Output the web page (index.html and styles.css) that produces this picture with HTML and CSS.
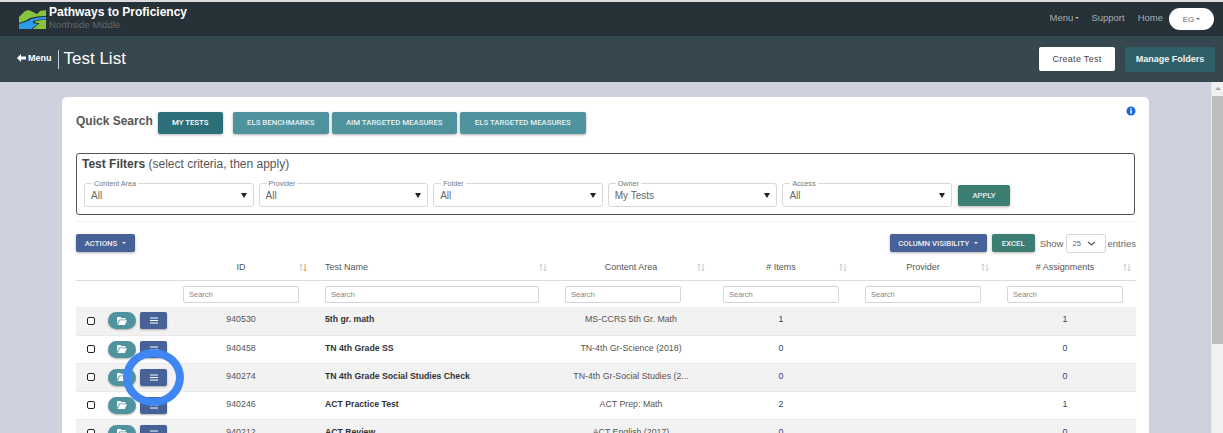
FILE: index.html
```html
<!DOCTYPE html>
<html lang="en">
<head>
<meta charset="utf-8">
<title>Test List</title>
<link rel="stylesheet" href="styles.css">
</head>
<body>
<div class="app">
  <nav class="topnav">
    <div class="brand">
      <svg class="logo" width="27" height="20" viewBox="0 0 27 20">
        <path d="M0 8 L5 3 Q8 0 12 2 L18 5 L21 2 L27 1 L27 7 C19 7 11 8 8 11 L0 14Z" fill="#86c440"/>
        <path d="M0 15 L9 12 C13 9 20 8 27 8 L27 10.5 C21 10.5 15 11 14 12.5 C13 14 16 14.5 19 15 L12 20 L0 20Z" fill="#2f9ae5"/>
        <path d="M15.5 12.5 C18 11.5 22 11 27 11 L27 20 L13.5 20 L20.5 14.5 C18 14 16 13.5 15.5 12.5Z" fill="#86c440"/>
      </svg>
      <div class="brand-text">
        <div class="brand-name">Pathways to Proficiency</div>
        <div class="brand-school">Northside Middle</div>
      </div>
    </div>
    <div class="nav-links">
      <span class="nav-link">Menu<i class="caret"></i></span>
      <span class="nav-link">Support</span>
      <span class="nav-link">Home</span>
      <span class="user-pill">EG<i class="caret"></i></span>
    </div>
  </nav>
  <header class="pagehead">
    <div class="pagehead-left">
      <span class="menu-back"><svg width="9" height="8" viewBox="0 0 9 8"><path d="M4 0 L0 4 L4 8 L4 5.5 L9 5.5 L9 2.5 L4 2.5Z" fill="#fff"/></svg>Menu</span>
      <h1 class="page-title">Test List</h1>
    </div>
    <div class="pagehead-right">
      <button class="btn-create">Create Test</button>
      <button class="btn-folders">Manage Folders</button>
    </div>
  </header>
  <div class="body-row">
    <main class="content">
      <section class="card">
        <div class="quick">
          <span class="quick-label">Quick Search</span>
          <button class="chip chip-active">MY TESTS</button>
          <button class="chip chip-first">ELS BENCHMARKS</button>
          <button class="chip">AIM TARGETED MEASURES</button>
          <button class="chip chip-last">ELS TARGETED MEASURES</button>
          <svg class="info" width="10" height="10" viewBox="0 0 10 10"><circle cx="5" cy="5" r="4.5" fill="#1a66e8"/><rect x="4.2" y="4.2" width="1.6" height="3.4" fill="#fff"/><rect x="4.2" y="2.2" width="1.6" height="1.3" fill="#fff"/></svg>
        </div>
        <section class="filters">
          <h2 class="filters-title"><b>Test Filters</b> (select criteria, then apply)</h2>
          <div class="filters-row">
            <fieldset class="fs"><legend>Content Area</legend><span>All</span><i class="tri"></i></fieldset>
            <fieldset class="fs"><legend>Provider</legend><span>All</span><i class="tri"></i></fieldset>
            <fieldset class="fs"><legend>Folder</legend><span>All</span><i class="tri"></i></fieldset>
            <fieldset class="fs"><legend>Owner</legend><span>My Tests</span><i class="tri"></i></fieldset>
            <fieldset class="fs"><legend>Access</legend><span>All</span><i class="tri"></i></fieldset>
            <button class="btn-apply">APPLY</button>
          </div>
        </section>
        <div class="divider"></div>
        <div class="toolbar">
          <button class="btn-blue btn-actions">ACTIONS<i class="caret caret-wide"></i></button>
          <div class="toolbar-right">
            <button class="btn-blue btn-colvis">COLUMN VISIBILITY<i class="caret caret-wide"></i></button>
            <button class="btn-excel">EXCEL</button>
            <span class="show">Show</span>
            <span class="select25">25<svg width="9" height="5" viewBox="0 0 9 5"><path d="M1 1 L4.5 4 L8 1" fill="none" stroke="#555" stroke-width="1.2"/></svg></span>
            <span class="show">entries</span>
          </div>
        </div>
        <table class="grid">
          <colgroup><col class="c-act"><col class="c-id"><col class="c-name"><col class="c-area"><col class="c-num"><col class="c-num"><col class="c-num"></colgroup>
          <thead>
            <tr class="heads">
              <th></th>
              <th class="sort"><span>ID</span><svg class="arr" width="8" height="9" viewBox="0 0 8 9"><path d="M2 8V1M2 1L.5 2.5M2 1L3.5 2.5" fill="none" stroke="#c5cbd0"/><path d="M6 1V8M6 8L4.5 6.5M6 8L7.5 6.5" fill="none" stroke="#f0963c"/></svg></th>
              <th class="sort left"><span>Test Name</span><svg class="arr" width="8" height="9" viewBox="0 0 8 9"><path d="M2 8V1M2 1L.5 2.5M2 1L3.5 2.5M6 1V8M6 8L4.5 6.5M6 8L7.5 6.5" fill="none" stroke="#c5cbd0"/></svg></th>
              <th class="sort"><span>Content Area</span><svg class="arr" width="8" height="9" viewBox="0 0 8 9"><path d="M2 8V1M2 1L.5 2.5M2 1L3.5 2.5M6 1V8M6 8L4.5 6.5M6 8L7.5 6.5" fill="none" stroke="#c5cbd0"/></svg></th>
              <th class="sort"><span># Items</span><svg class="arr" width="8" height="9" viewBox="0 0 8 9"><path d="M2 8V1M2 1L.5 2.5M2 1L3.5 2.5M6 1V8M6 8L4.5 6.5M6 8L7.5 6.5" fill="none" stroke="#c5cbd0"/></svg></th>
              <th class="sort"><span>Provider</span><svg class="arr" width="8" height="9" viewBox="0 0 8 9"><path d="M2 8V1M2 1L.5 2.5M2 1L3.5 2.5M6 1V8M6 8L4.5 6.5M6 8L7.5 6.5" fill="none" stroke="#c5cbd0"/></svg></th>
              <th class="sort"><span># Assignments</span><svg class="arr" width="8" height="9" viewBox="0 0 8 9"><path d="M2 8V1M2 1L.5 2.5M2 1L3.5 2.5M6 1V8M6 8L4.5 6.5M6 8L7.5 6.5" fill="none" stroke="#c5cbd0"/></svg></th>
            </tr>
            <tr class="searches">
              <th></th>
              <th><span class="search">Search</span></th>
              <th><span class="search search-wide">Search</span></th>
              <th><span class="search">Search</span></th>
              <th><span class="search">Search</span></th>
              <th><span class="search">Search</span></th>
              <th><span class="search">Search</span></th>
            </tr>
          </thead>
          <tbody>
            <tr>
              <td><div class="acts"><span class="cb"></span><span class="pill"><svg width="10" height="8" viewBox="0 0 10 8"><path d="M0 1 Q0 0 1 0 H3.4 L4.4 1 H8 Q8.8 1 8.8 2 V2.6 H2.4 L0 6.6Z M2.9 3.2 H10 L7.8 8 H.4Z" fill="#fff"/></svg></span><span class="sq"><svg width="8" height="7" viewBox="0 0 8 7"><path d="M0 1H8M0 3.5H8M0 6H8" stroke="#fff" stroke-width="1"/></svg></span></div></td>
              <td class="ctr">940530</td><td class="name">5th gr. math</td><td class="ctr">MS-CCRS 5th Gr. Math</td><td class="ctr link">1</td><td></td><td class="ctr link">1</td>
            </tr>
            <tr>
              <td><div class="acts"><span class="cb"></span><span class="pill"><svg width="10" height="8" viewBox="0 0 10 8"><path d="M0 1 Q0 0 1 0 H3.4 L4.4 1 H8 Q8.8 1 8.8 2 V2.6 H2.4 L0 6.6Z M2.9 3.2 H10 L7.8 8 H.4Z" fill="#fff"/></svg></span><span class="sq"><svg width="8" height="7" viewBox="0 0 8 7"><path d="M0 1H8M0 3.5H8M0 6H8" stroke="#fff" stroke-width="1"/></svg></span></div></td>
              <td class="ctr">940458</td><td class="name">TN 4th Grade SS</td><td class="ctr">TN-4th Gr-Science (2018)</td><td class="ctr link">0</td><td></td><td class="ctr link">0</td>
            </tr>
            <tr>
              <td><div class="acts"><span class="cb"></span><span class="pill"><svg width="10" height="8" viewBox="0 0 10 8"><path d="M0 1 Q0 0 1 0 H3.4 L4.4 1 H8 Q8.8 1 8.8 2 V2.6 H2.4 L0 6.6Z M2.9 3.2 H10 L7.8 8 H.4Z" fill="#fff"/></svg></span><span class="sq"><svg width="8" height="7" viewBox="0 0 8 7"><path d="M0 1H8M0 3.5H8M0 6H8" stroke="#fff" stroke-width="1"/></svg><i class="ring"></i></span></div></td>
              <td class="ctr">940274</td><td class="name">TN 4th Grade Social Studies Check</td><td class="ctr">TN-4th Gr-Social Studies (2...</td><td class="ctr link">0</td><td></td><td class="ctr link">0</td>
            </tr>
            <tr>
              <td><div class="acts"><span class="cb"></span><span class="pill"><svg width="10" height="8" viewBox="0 0 10 8"><path d="M0 1 Q0 0 1 0 H3.4 L4.4 1 H8 Q8.8 1 8.8 2 V2.6 H2.4 L0 6.6Z M2.9 3.2 H10 L7.8 8 H.4Z" fill="#fff"/></svg></span><span class="sq"><svg width="8" height="7" viewBox="0 0 8 7"><path d="M0 1H8M0 3.5H8M0 6H8" stroke="#fff" stroke-width="1"/></svg></span></div></td>
              <td class="ctr">940246</td><td class="name">ACT Practice Test</td><td class="ctr">ACT Prep: Math</td><td class="ctr link">2</td><td></td><td class="ctr link">1</td>
            </tr>
            <tr>
              <td><div class="acts"><span class="cb"></span><span class="pill"><svg width="10" height="8" viewBox="0 0 10 8"><path d="M0 1 Q0 0 1 0 H3.4 L4.4 1 H8 Q8.8 1 8.8 2 V2.6 H2.4 L0 6.6Z M2.9 3.2 H10 L7.8 8 H.4Z" fill="#fff"/></svg></span><span class="sq"><svg width="8" height="7" viewBox="0 0 8 7"><path d="M0 1H8M0 3.5H8M0 6H8" stroke="#fff" stroke-width="1"/></svg></span></div></td>
              <td class="ctr">940212</td><td class="name">ACT Review</td><td class="ctr">ACT English (2017)</td><td class="ctr link">0</td><td></td><td class="ctr link">0</td>
            </tr>
          </tbody>
        </table>
      </section>
    </main>
    <div class="scrollbar"><div class="sb-up"></div><div class="sb-thumb"></div></div>
  </div>
</div>
</body>
</html>
```
FILE: styles.css
```css
* { box-sizing: border-box; }
html, body { margin: 0; height: 100%; overflow: hidden; }
body { font-family: "Liberation Sans", Arial, sans-serif; color: #444; background: #ced2de; }
button { font-family: Roboto, "Liberation Sans", sans-serif; border: 0; cursor: pointer; }
.app { height: 433px; display: flex; flex-direction: column; border-top: 2px solid #dcdcdc; }

.topnav { height: 34px; flex: none; background: #263238; display: flex; justify-content: space-between; padding: 0 9px 0 19px; }
.brand { display: flex; gap: 3px; align-items: flex-start; }
.logo { margin-top: 7px; }
.brand-name { color: #fff; font-size: 12px; font-weight: 700; line-height: 14px; margin-top: 3px; }
.brand-school { color: #5f686d; font-size: 9.5px; line-height: 11px; margin-top: 0; }
.nav-links { display: flex; align-items: center; gap: 13px; font-size: 9.5px; color: #a7adb1; }
.nav-link { margin-top: -3px; }
.nav-link:first-child { margin-right: -1px; margin-left: 1px; }
.user-pill { background: #fff; color: #666; width: 45px; height: 22px; border-radius: 11px; display: flex; align-items: center; justify-content: center; font-size: 8px; margin-left: -7px; }
.caret { display: inline-block; border: 2.5px solid transparent; border-top-color: currentColor; border-bottom: 0; margin-left: 2px; vertical-align: middle; }
.caret-wide { margin-left: 5px; }

.pagehead { height: 46px; flex: none; background: #37474f; display: flex; justify-content: space-between; align-items: center; padding: 0 8px 0 17px; }
.pagehead-left { display: flex; align-items: center; }
.menu-back { color: #fff; font-size: 9px; font-weight: 700; display: flex; align-items: center; gap: 2px; padding: 0 6px 3px 0; height: 19px; border-right: 1px solid #c5cbce; }
.page-title { margin: 0 0 0 5px; color: #fff; font-size: 17px; font-weight: 400; line-height: 20px; }
.pagehead-right { display: flex; gap: 10px; }
.btn-create { width: 76px; height: 24px; background: #fff; color: #444; font-family: "Liberation Sans", sans-serif; font-size: 9px; letter-spacing: .3px; border-radius: 2px; padding: 0; }
.btn-folders { width: 90px; height: 25px; background: #2f5f67; color: #f3f3f3; font-family: "Liberation Sans", sans-serif; font-size: 9px; font-weight: 700; border-radius: 2px; padding: 0; }

.body-row { flex: 1; display: flex; min-height: 0; }
.content { flex: 1; padding: 15px 62px 0; overflow: hidden; min-width: 0; border-right: 1px solid #e4e6ec; }
.card { background: #fff; border-radius: 5px 5px 0 0; padding: 14px 14px 0; height: 400px; }
.scrollbar { width: 11px; flex: none; background: #f1f1f1; display: flex; flex-direction: column; }
.sb-up { height: 14px; }
.sb-up::after { content: ""; display: block; width: 0; margin: 5px auto 0; border: 3px solid transparent; border-bottom: 3px solid #a5a5a5; border-top: 0; }
.sb-thumb { height: 248px; background: #bebebe; }

.quick { display: flex; align-items: center; height: 23px; position: relative; }
.quick-label { font-size: 12px; font-weight: 700; color: #555; margin-right: 5px; margin-top: -3px; }
.chip { height: 22px; background: #4f939e; color: #e6f0f2; font-size: 7.8px; font-weight: 500; border-radius: 2px; padding: 0; margin-left: 3px; width: 125px; box-shadow: 0 1px 3px rgba(0,0,0,.3); }
.chip-active { background: #2b7078; width: 65px; margin-left: 0; color: #fff; }
.chip-first { width: 96px; margin-left: 10px; }
.chip-last { width: 126px; }
.info { position: absolute; right: -1px; top: -5px; }

.filters { margin-top: 19px; height: 62px; border: 1px solid #555; border-radius: 3px; padding: 3px 5px 0; }
.filters-title { margin: 0; font-size: 12px; font-weight: 400; line-height: 15px; color: #555; }
.filters-title b { color: #444; }
.filters-row { display: flex; margin-top: 8px; gap: 5px; align-items: flex-start; padding-left: 2px; }
.fs { margin: 0; padding: 0 4px 0 6px; height: 27px; border: 1px solid #d8d8d8; border-radius: 3px; display: flex; align-items: center; justify-content: space-between; width: 169.6px; font-size: 10px; color: #666; min-width: 0; flex: none; }
.fs legend { font-size: 7.2px; color: #777; padding: 0 2px; margin-left: 1px; line-height: 7px; height: 7px; }
.fs span { margin-top: -3px; }
.tri { border: 3px solid transparent; border-top: 5px solid #222; border-bottom: 0; margin-right: 2px; margin-top: -2px; }
.btn-apply { width: 52px; height: 21px; background: #3d7e74; color: #eee; font-size: 7.8px; font-weight: 500; border-radius: 2px; margin: 5px 0 0 1px; padding: 0; box-shadow: 0 1px 3px rgba(0,0,0,.3); }

.divider { height: 1px; background: #f1f1f1; margin-top: 6px; }
.toolbar { display: flex; justify-content: space-between; align-items: center; margin-top: 11px; height: 20px; }
.btn-blue { background: #476298; color: #eee; font-size: 7.8px; font-weight: 500; height: 18px; border-radius: 2px; padding: 0; box-shadow: 0 1px 3px rgba(0,0,0,.3); }
.btn-actions { width: 59px; }
.btn-colvis { width: 97px; }
.toolbar-right { display: flex; align-items: center; gap: 5px; margin-right: -1px; }
.btn-excel { width: 43px; height: 18px; background: #3d7e74; color: #eee; font-size: 7.8px; font-weight: 500; border-radius: 2px; padding: 0; box-shadow: 0 1px 3px rgba(0,0,0,.3); }
.show { font-size: 9.5px; color: #666; }
.select25 { width: 40px; height: 19px; border: 1px solid #d5d5d5; border-radius: 3px; font-size: 7.5px; color: #666; display: flex; align-items: center; justify-content: space-between; padding: 0 9px 0 5px; margin: 0 -4px 0 -2px; }

.grid { width: 1060px; border-collapse: collapse; table-layout: fixed; margin-top: 1px; }
.c-act { width: 94px; }
.c-id { width: 142px; }
.c-name { width: 240px; }
.c-area { width: 158px; }
.c-num { width: 142px; }
.heads th { height: 26px; font-size: 9px; font-weight: 400; color: #555; text-align: center; border-bottom: 1px solid #ddd; position: relative; padding: 0; }
.heads th.left { text-align: left; padding-left: 13px; }
.arr { position: absolute; right: 5px; top: 9px; }
.searches th { height: 27px; padding: 1px 13px 0; text-align: left; font-weight: 400; }
.search { display: block; width: 116px; height: 17px; border: 1px solid #d5d5d5; border-radius: 2px; font-size: 7.5px; color: #888; line-height: 15px; padding-left: 5px; }
.search-wide { width: 214px; }
tbody tr { height: 28px; }
tbody tr:nth-child(odd) { background: #f2f2f2; }
tbody td { font-size: 8.8px; color: #555; padding: 0 0 3px; border-bottom: 1px solid #e9e9e9; }
tbody tr:last-child td { border-bottom: 0; }
.ctr { text-align: center; }
.link { color: #2a3f7a; }
tbody td.name { font-size: 8.7px; font-weight: 700; color: #333; padding: 0 0 3px 13px; }
.acts { display: flex; align-items: center; padding-left: 11px; margin-bottom: -3px; }
.cb { width: 8px; height: 8px; border: 1px solid #222; border-radius: 2px; background: #fff; margin-right: 13px; }
.pill { width: 28px; height: 17px; border-radius: 9px; background: #4f939e; display: flex; align-items: center; justify-content: center; box-shadow: 0 1px 2px rgba(0,0,0,.3); }
.sq { width: 27px; height: 17px; border-radius: 2px; background: #476298; margin-left: 4px; display: flex; align-items: center; justify-content: center; position: relative; box-shadow: 0 1px 2px rgba(0,0,0,.3); }
.ring { position: absolute; z-index: 2; left: -17px; top: -20px; width: 61px; height: 57px; border: 8px solid #3f86f2; border-radius: 50%; }
```
